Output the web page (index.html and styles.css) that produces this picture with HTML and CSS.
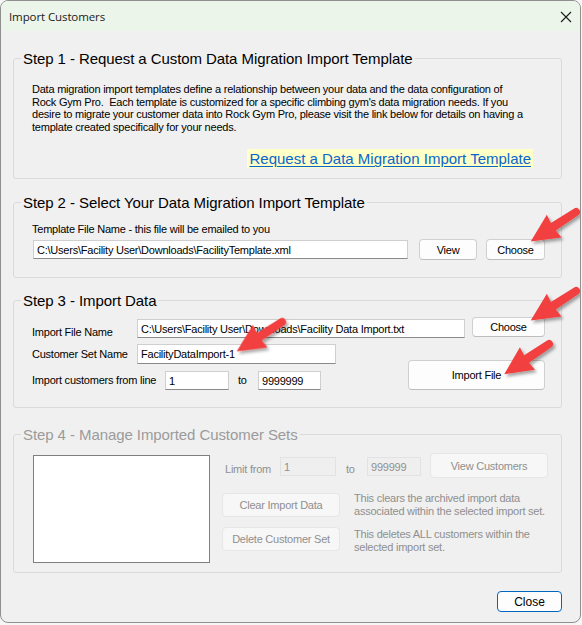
FILE: index.html
```html
<!DOCTYPE html>
<html lang="en">
<head>
<meta charset="utf-8">
<title>Import Customers</title>
<link rel="stylesheet" href="styles.css">
</head>
<body>
<div class="window">
  <div class="titlebar">
    <span class="title">Import Customers</span>
    <svg class="close-x" width="12" height="12" viewBox="0 0 12 12"><path d="M1 1 L11 11 M11 1 L1 11" stroke="#1a1a1a" stroke-width="1.1" fill="none"/></svg>
  </div>
  <div class="content">
    <fieldset class="group g1">
      <legend>Step 1 - Request a Custom Data Migration Import Template</legend>
      <p class="desc">Data migration import templates define a relationship between your data and the data configuration of<br>Rock Gym Pro.&nbsp; Each template is customized for a specific climbing gym's data migration needs. If you<br>desire to migrate your customer data into Rock Gym Pro, please visit the link below for details on having a<br>template created specifically for your needs.</p>
      <div class="link-row"><a class="link" href="#">Request a Data Migration Import Template</a></div>
    </fieldset>

    <fieldset class="group g2">
      <legend>Step 2 - Select Your Data Migration Import Template</legend>
      <div class="label l-template">Template File Name - this file will be emailed to you</div>
      <div class="row r-template">
        <div class="input in-template">C:\Users\Facility User\Downloads\FacilityTemplate.xml</div>
        <div class="btn btn-view">View</div>
        <div class="btn btn-choose1">Choose</div>
      </div>
    </fieldset>

    <fieldset class="group g3">
      <legend>Step 3 - Import Data</legend>
      <div class="row r-file">
        <div class="label l-file">Import File Name</div>
        <div class="input in-file">C:\Users\Facility User\Downloads\Facility Data Import.txt</div>
        <div class="btn btn-choose2">Choose</div>
      </div>
      <div class="row r-lower">
        <div class="lower-left">
          <div class="row r-set">
            <div class="label l-set">Customer Set Name</div>
            <div class="input in-set">FacilityDataImport-1</div>
          </div>
          <div class="row r-lines">
            <div class="label l-lines">Import customers from line</div>
            <div class="input in-from">1</div>
            <div class="label l-to">to</div>
            <div class="input in-to">9999999</div>
          </div>
        </div>
        <div class="btn btn-import">Import File</div>
      </div>
    </fieldset>

    <fieldset class="group g4 disabled">
      <legend>Step 4 - Manage Imported Customer Sets</legend>
      <div class="row r-manage">
        <div class="listbox"></div>
        <div class="manage-right">
          <div class="row r-limit">
            <div class="label l-limit">Limit from</div>
            <div class="input in-limit1">1</div>
            <div class="label l-limit-to">to</div>
            <div class="input in-limit2">999999</div>
            <div class="btn btn-viewcust">View Customers</div>
          </div>
          <div class="row r-clear">
            <div class="btn btn-side">Clear Import Data</div>
            <div class="note">This clears the archived import data<br>associated within the selected import set.</div>
          </div>
          <div class="row r-delete">
            <div class="btn btn-side">Delete Customer Set</div>
            <div class="note">This deletes ALL customers within the<br>selected import set.</div>
          </div>
        </div>
      </div>
    </fieldset>

    <div class="footer">
      <div class="btn btn-close">Close</div>
    </div>
  </div>

  <svg class="arrows" width="582" height="625" viewBox="0 0 582 625">
    <defs>
      <filter id="shadow" x="-20%" y="-20%" width="140%" height="140%">
        <feDropShadow dx="2" dy="2.5" stdDeviation="1.6" flood-color="#000" flood-opacity="0.35"/>
      </filter>
      <path id="arrow" d="M0,-4 L27,-4.5 L26,-13.5 L54,0 L26,13.5 L27,4.5 L0,4 A4,4 0 0 1 0,-4 Z"/>
    </defs>
    <g filter="url(#shadow)" fill="#f23f3f">
      <use href="#arrow" transform="translate(576,212) rotate(147)"/>
      <use href="#arrow" transform="translate(576,291) rotate(147)"/>
      <use href="#arrow" transform="translate(549,344) rotate(146)"/>
      <use href="#arrow" transform="translate(282,322) rotate(147)"/>
    </g>
  </svg>
</div>
</body>
</html>
```

FILE: styles.css
```css
html, body {
  margin: 0;
  padding: 0;
  background: #f6f6f6;
}

.window {
  position: relative;
  box-sizing: border-box;
  width: 581px;
  height: 623px;
  border: 1px solid #8f8f8f;
  border-radius: 8px;
  overflow: hidden;
  background: #f0f0f0;
  font-family: "Liberation Sans", Arial, sans-serif;
  font-size: 11px;
  letter-spacing: -0.23px;
  color: #000;
}

.titlebar {
  height: 30px;
  background: #ecf5ea;
  display: flex;
  align-items: center;
  justify-content: space-between;
  padding: 0 8px 0 8px;
  letter-spacing: 0;
}

.title {
  font-family: "Open Sans", "Noto Sans", sans-serif;
  font-size: 11.5px;
  letter-spacing: -0.1px;
  color: #1a1a1a;
  margin-top: 1px;
}

.close-x {
  margin-top: 1px;
}

.content {
  padding-top: 19px;
}

.group {
  box-sizing: border-box;
  margin: 0 18px 0 12px;
  border: 1px solid #dadada;
  border-radius: 3px;
  padding: 0 16px 0 18px;
  min-width: 0;
}

.group legend {
  font-size: 15px;
  line-height: 17px;
  letter-spacing: -0.08px;
  padding: 0 2px;
  margin-left: -11px;
  color: #000;
}

.label {
  line-height: 13px;
  white-space: nowrap;
  flex-shrink: 0;
}

.row {
  display: flex;
  align-items: flex-start;
}

.input {
  box-sizing: border-box;
  flex-shrink: 0;
  background: #fff;
  border: 1px solid #cfcfcf;
  border-bottom-color: #8a8a8a;
  padding: 0 3px;
  font-size: 11px;
  white-space: nowrap;
  overflow: hidden;
  display: flex;
  align-items: center;
}

.btn {
  box-sizing: border-box;
  flex-shrink: 0;
  background: #fdfdfd;
  border: 1px solid #d0d0d0;
  border-bottom-color: #bdbdbd;
  border-radius: 4px;
  display: flex;
  align-items: center;
  justify-content: center;
  white-space: nowrap;
  font-size: 11px;
  color: #000;
}

/* Step 1 */
.g1 {
  padding-bottom: 10px;
}

.desc {
  margin: 16px 0 0 0;
  line-height: 12.6px;
  white-space: nowrap;
}

.link-row {
  display: flex;
  justify-content: flex-end;
  margin: 16px 12px 0 0;
}

.link {
  display: block;
  height: 19px;
  line-height: 19px;
  padding: 0 2px;
  background: #ffffc8;
  color: #0a66cc;
  font-size: 15px;
  letter-spacing: 0;
  text-decoration: underline;
  text-underline-offset: 2px;
}

/* Step 2 */
.g2 {
  margin-top: 15px;
  padding-bottom: 17px;
}

.l-template {
  margin-top: 12px;
}

.r-template {
  margin-top: 3px;
}

.in-template {
  margin: 1px 0 0 1px;
  width: 375px;
  height: 19px;
}

.btn-view {
  margin-left: 11px;
  width: 58px;
  height: 21px;
}

.btn-choose1 {
  margin-left: 9px;
  width: 59px;
  height: 21px;
}

/* Step 3 */
.g3 {
  margin-top: 14px;
  padding-bottom: 17px;
}

.r-file {
  margin-top: 8px;
  height: 21px;
}

.l-file {
  width: 105px;
  margin-top: 8.5px;
}

.in-file {
  width: 328px;
  height: 19px;
  margin-top: 2px;
}

.btn-choose2 {
  margin-left: 7px;
  width: 73px;
  height: 20px;
}

.r-lower {
  margin-top: 6px;
  justify-content: space-between;
}

.r-set {
  height: 20px;
  align-items: center;
}

.l-set {
  width: 105px;
}

.in-set {
  width: 199px;
  height: 20px;
}

.r-lines {
  margin-top: 7px;
  height: 19px;
  align-items: center;
}

.l-lines {
  width: 133px;
}

.in-from {
  width: 64px;
  height: 19px;
}

.l-to {
  margin-left: 9px;
  width: 20px;
}

.in-to {
  width: 63px;
  height: 19px;
}

.btn-import {
  margin-top: 16px;
  width: 137px;
  height: 30px;
}

/* Step 4 (disabled) */
.g4 {
  margin-top: 18px;
  padding-bottom: 9px;
}

.g4 legend {
  color: #9b9b9b;
}

.disabled .label,
.disabled .note {
  color: #8f8f8f;
}

.disabled .input {
  background: #efefef;
  border: 1px solid #e2e2e2;
  color: #8f8f8f;
}

.disabled .btn {
  background: #f7f7f7;
  border: 1px solid #e6e6e6;
  color: #8f8f8f;
}

.r-manage {
  margin-top: 10px;
}

.listbox {
  box-sizing: border-box;
  flex-shrink: 0;
  margin: 2px 0 0 1px;
  width: 177px;
  height: 108px;
  background: #fff;
  border: 1px solid #7f7f7f;
}

.manage-right {
  flex-shrink: 0;
  margin-left: 12px;
}

.r-limit {
  height: 25px;
}

.l-limit {
  margin: 9.5px 0 0 3px;
  width: 55px;
}

.in-limit1 {
  margin-top: 4px;
  width: 56px;
  height: 19px;
}

.l-limit-to {
  margin: 9.5px 0 0 10px;
  width: 21px;
}

.in-limit2 {
  margin-top: 4px;
  width: 54px;
  height: 19px;
}

.btn-viewcust {
  margin-left: 9px;
  width: 118px;
  height: 25px;
}

.r-clear {
  margin-top: 14px;
}

.r-clear .btn-side {
  margin-top: 1px;
}

.r-delete {
  margin-top: 9px;
}

.r-delete .note {
  margin-top: 1px;
}

.btn-side {
  width: 118px;
  height: 24px;
}

.note {
  margin-left: 14px;
  line-height: 13px;
  white-space: nowrap;
}

/* Footer */
.footer {
  display: flex;
  justify-content: flex-end;
  margin: 18px 18px 0 0;
}

.btn-close {
  width: 65px;
  height: 21px;
  background: #fdfdfd;
  border: 1px solid #0067c0;
  border-radius: 4px;
  font-size: 12px;
  letter-spacing: 0;
}

/* Annotation arrows overlay */
.arrows {
  position: absolute;
  left: -1px;
  top: -1px;
  pointer-events: none;
}
```
